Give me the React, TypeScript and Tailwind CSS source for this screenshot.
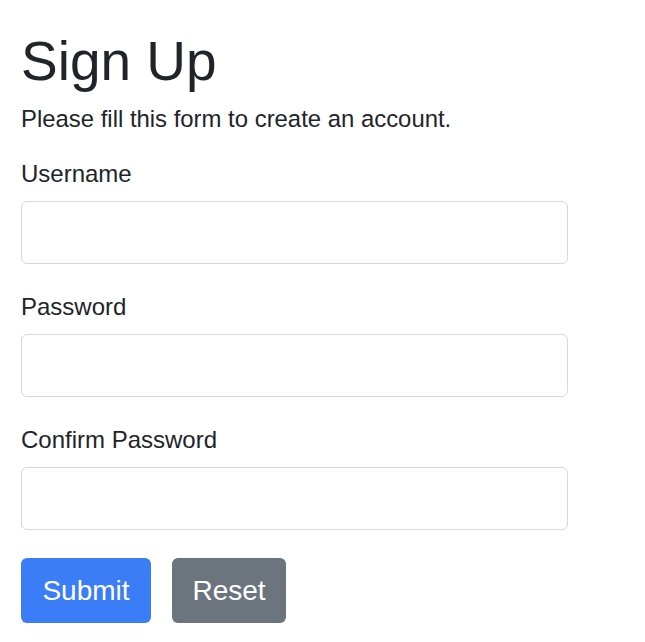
export default function App() {
  return (
    <div className="min-h-screen bg-white pl-[21px] pt-[28px] text-[#212529] [font-family:'Liberation_Sans',Arial,sans-serif]">
      <div className="w-[547px]">
        <h2 className="text-[55px] leading-[66px] font-normal">Sign Up</h2>
        <p className="mt-[7px] text-[23.9px] leading-[36px]">Please fill this form to create an account.</p>
        <form className="mt-[19px]">
          <div className="mb-[25px]">
            <label className="block text-[24px] leading-[36px]">Username</label>
            <input type="text" className="mt-[9px] block h-[63px] w-full rounded-[6px] border border-[#d4d8dc] bg-white px-4 text-[24px] outline-none" />
          </div>
          <div className="mb-[25px]">
            <label className="block text-[24px] leading-[36px]">Password</label>
            <input type="password" className="mt-[9px] block h-[63px] w-full rounded-[6px] border border-[#d4d8dc] bg-white px-4 text-[24px] outline-none" />
          </div>
          <div>
            <label className="block text-[24px] leading-[36px]">Confirm Password</label>
            <input type="password" className="mt-[9px] block h-[63px] w-full rounded-[6px] border border-[#d4d8dc] bg-white px-4 text-[24px] outline-none" />
          </div>
          <div className="mt-[28px] flex gap-[21px]">
            <button type="submit" className="h-[65px] w-[130px] rounded-[6px] bg-[#3b7df6] text-[28px] text-white">
              Submit
            </button>
            <button type="reset" className="h-[65px] w-[114px] rounded-[6px] bg-[#6c757d] text-[28px] text-white">
              Reset
            </button>
          </div>
        </form>
      </div>
    </div>
  )
}
